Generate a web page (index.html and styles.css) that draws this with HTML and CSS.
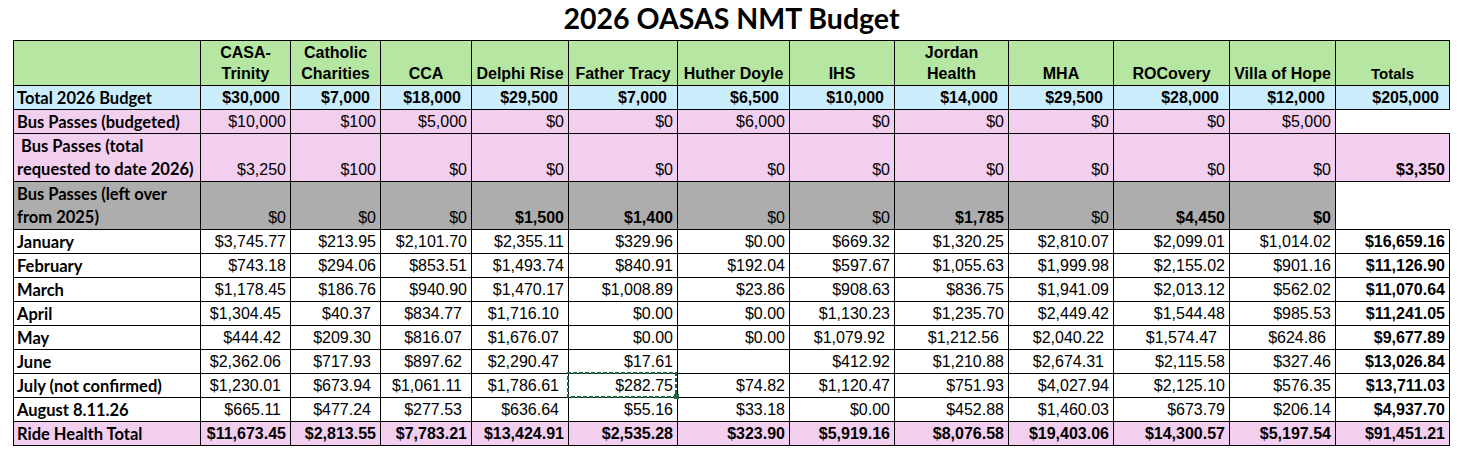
FILE: index.html
```html
<!DOCTYPE html>
<html>
<head>
<meta charset="utf-8">
<link rel="stylesheet" href="styles.css">
</head>
<body>
<div class="sheet">
  <div class="title">2026 OASAS NMT Budget</div>
  <table class="budget">
    <colgroup>
      <col class="c-label"><col class="c90"><col class="c90"><col class="c91"><col class="c97"><col class="c109"><col class="c112"><col class="c105"><col class="c114"><col class="c105"><col class="c116"><col class="c106"><col class="c114">
    </colgroup>
    <tr class="head">
      <td></td>
      <td>CASA-<br>Trinity</td>
      <td>Catholic<br>Charities</td>
      <td>CCA</td>
      <td>Delphi Rise</td>
      <td>Father Tracy</td>
      <td>Huther Doyle</td>
      <td>IHS</td>
      <td>Jordan<br>Health</td>
      <td>MHA</td>
      <td>ROCovery</td>
      <td>Villa of Hope</td>
      <td class="tot-head">Totals</td>
    </tr>
    <tr class="r blue b">
      <td class="lbl">Total 2026 Budget</td>
      <td>$30,000</td><td>$7,000</td><td>$18,000</td><td>$29,500</td><td>$7,000</td><td>$6,500</td><td>$10,000</td><td>$14,000</td><td>$29,500</td><td>$28,000</td><td>$12,000</td><td>$205,000</td>
    </tr>
    <tr class="r pink">
      <td class="lbl">Bus Passes (budgeted)</td>
      <td>$10,000</td><td>$100</td><td>$5,000</td><td>$0</td><td>$0</td><td>$6,000</td><td>$0</td><td>$0</td><td>$0</td><td>$0</td><td>$5,000</td><td class="blank"></td>
    </tr>
    <tr class="r2 pink">
      <td class="lbl">&nbsp;Bus Passes (total<br>requested to date 2026)</td>
      <td>$3,250</td><td>$100</td><td>$0</td><td>$0</td><td>$0</td><td>$0</td><td>$0</td><td>$0</td><td>$0</td><td>$0</td><td>$0</td><td class="bold">$3,350</td>
    </tr>
    <tr class="r2 gray">
      <td class="lbl">Bus Passes (left over<br>from 2025)</td>
      <td>$0</td><td>$0</td><td>$0</td><td class="bold">$1,500</td><td class="bold">$1,400</td><td>$0</td><td>$0</td><td class="bold">$1,785</td><td>$0</td><td class="bold">$4,450</td><td class="bold">$0</td><td class="blank"></td>
    </tr>
    <tr class="r">
      <td class="lbl">January</td>
      <td>$3,745.77</td><td>$213.95</td><td>$2,101.70</td><td>$2,355.11</td><td>$329.96</td><td>$0.00</td><td>$669.32</td><td>$1,320.25</td><td>$2,810.07</td><td>$2,099.01</td><td>$1,014.02</td><td class="bold">$16,659.16</td>
    </tr>
    <tr class="r">
      <td class="lbl">February</td>
      <td>$743.18</td><td>$294.06</td><td>$853.51</td><td>$1,493.74</td><td>$840.91</td><td>$192.04</td><td>$597.67</td><td>$1,055.63</td><td>$1,999.98</td><td>$2,155.02</td><td>$901.16</td><td class="bold">$11,126.90</td>
    </tr>
    <tr class="r">
      <td class="lbl">March</td>
      <td>$1,178.45</td><td>$186.76</td><td>$940.90</td><td>$1,470.17</td><td>$1,008.89</td><td>$23.86</td><td>$908.63</td><td>$836.75</td><td>$1,941.09</td><td>$2,013.12</td><td>$562.02</td><td class="bold">$11,070.64</td>
    </tr>
    <tr class="r">
      <td class="lbl">April</td>
      <td class="sp">$1,304.45</td><td class="sp">$40.37</td><td class="sp">$834.77</td><td class="sp">$1,716.10</td><td>$0.00</td><td>$0.00</td><td>$1,130.23</td><td>$1,235.70</td><td>$2,449.42</td><td>$1,544.48</td><td>$985.53</td><td class="bold">$11,241.05</td>
    </tr>
    <tr class="r">
      <td class="lbl">May</td>
      <td class="sp">$444.42</td><td class="sp">$209.30</td><td class="sp">$816.07</td><td class="sp">$1,676.07</td><td>$0.00</td><td>$0.00</td><td class="sp">$1,079.92</td><td class="sp">$1,212.56</td><td class="sp">$2,040.22</td><td class="sp2">$1,574.47</td><td class="sp">$624.86</td><td class="bold">$9,677.89</td>
    </tr>
    <tr class="r">
      <td class="lbl">June</td>
      <td class="sp">$2,362.06</td><td class="sp">$717.93</td><td class="sp">$897.62</td><td class="sp">$2,290.47</td><td>$17.61</td><td></td><td>$412.92</td><td>$1,210.88</td><td class="sp">$2,674.31</td><td>$2,115.58</td><td>$327.46</td><td class="bold">$13,026.84</td>
    </tr>
    <tr class="r">
      <td class="lbl">July (not confirmed)</td>
      <td class="sp">$1,230.01</td><td class="sp">$673.94</td><td class="sp">$1,061.11</td><td class="sp">$1,786.61</td><td class="selected">$282.75<svg class="sel-box" width="112" height="27" viewBox="0 0 112 27" shape-rendering="crispEdges"><path d="M0 1H110M109 0V26M110 25H0M1 26V0" fill="none" stroke="#1a6a3e" stroke-width="2" stroke-dasharray="4 2"/><rect x="107" y="22" width="5" height="5" fill="#1a6a3e"/></svg></td><td>$74.82</td><td>$1,120.47</td><td>$751.93</td><td>$4,027.94</td><td>$2,125.10</td><td>$576.35</td><td class="bold">$13,711.03</td>
    </tr>
    <tr class="r">
      <td class="lbl">August 8.11.26</td>
      <td class="sp">$665.11</td><td class="sp">$477.24</td><td class="sp">$277.53</td><td class="sp">$636.64</td><td>$55.16</td><td>$33.18</td><td>$0.00</td><td>$452.88</td><td>$1,460.03</td><td>$673.79</td><td>$206.14</td><td class="bold">$4,937.70</td>
    </tr>
    <tr class="r pink b">
      <td class="lbl">Ride Health Total</td>
      <td>$11,673.45</td><td>$2,813.55</td><td>$7,783.21</td><td>$13,424.91</td><td>$2,535.28</td><td>$323.90</td><td>$5,919.16</td><td>$8,076.58</td><td>$19,403.06</td><td>$14,300.57</td><td>$5,197.54</td><td>$91,451.21</td>
    </tr>
  </table>
</div>
</body>
</html>
```
FILE: styles.css
```css
html, body {
  margin: 0;
  padding: 0;
  background: #ffffff;
}

.sheet {
  padding-left: 13px;
  width: 1437px;
}

.title {
  font-family: "Lato", "Liberation Sans", sans-serif;
  font-weight: 700;
  font-size: 28.5px;
  line-height: 37px;
  margin-bottom: 3px;
  text-align: center;
  color: #000;
}

.budget {
  border-collapse: collapse;
  table-layout: fixed;
  width: 1437px;
  font-family: "Liberation Sans", Arial, sans-serif;
  font-size: 16px;
  color: #000;
}

.c-label { width: 187px; }
.c90 { width: 90px; }
.c91 { width: 91px; }
.c97 { width: 97px; }
.c105 { width: 105px; }
.c106 { width: 106px; }
.c109 { width: 109px; }
.c112 { width: 112px; }
.c114 { width: 114px; }
.c116 { width: 116px; }

.budget td {
  border: 1px solid #000;
  padding: 0 4px 1px 3px;
  text-align: right;
  vertical-align: bottom;
  white-space: nowrap;
  overflow: visible;
}

.head td {
  background: #b5e6a2;
  height: 43px;
  text-align: center;
  font-weight: 700;
  line-height: 21px;
  padding: 0 2px 1px 2px;
}

.head td.tot-head {
  font-size: 15px;
}

.r td {
  height: 22px;
  line-height: 20px;
  padding-bottom: 1px;
}

.r2 td {
  height: 47px;
  line-height: 23px;
  padding-bottom: 0;
}

.budget td.lbl {
  text-align: left;
  font-family: "Lato", "Liberation Sans", sans-serif;
  font-weight: 700;
  font-size: 16.5px;
  padding-left: 3px;
}

.b td {
  font-weight: 700;
}

.blue td {
  background: #caedfb;
  padding-right: 10px;
}

.pink td {
  background: #f2ceef;
}

.gray td {
  background: #adadad;
}

.budget td.bold {
  font-weight: 700;
}

.budget td.sp {
  padding-right: 9px;
}

.budget td.sp2 {
  padding-right: 12px;
}

.budget td.blank {
  background: #ffffff;
  border: none;
}

.budget td.selected {
  position: relative;
}

.sel-box {
  position: absolute;
  left: -2px;
  top: -2px;
  pointer-events: none;
}
```
